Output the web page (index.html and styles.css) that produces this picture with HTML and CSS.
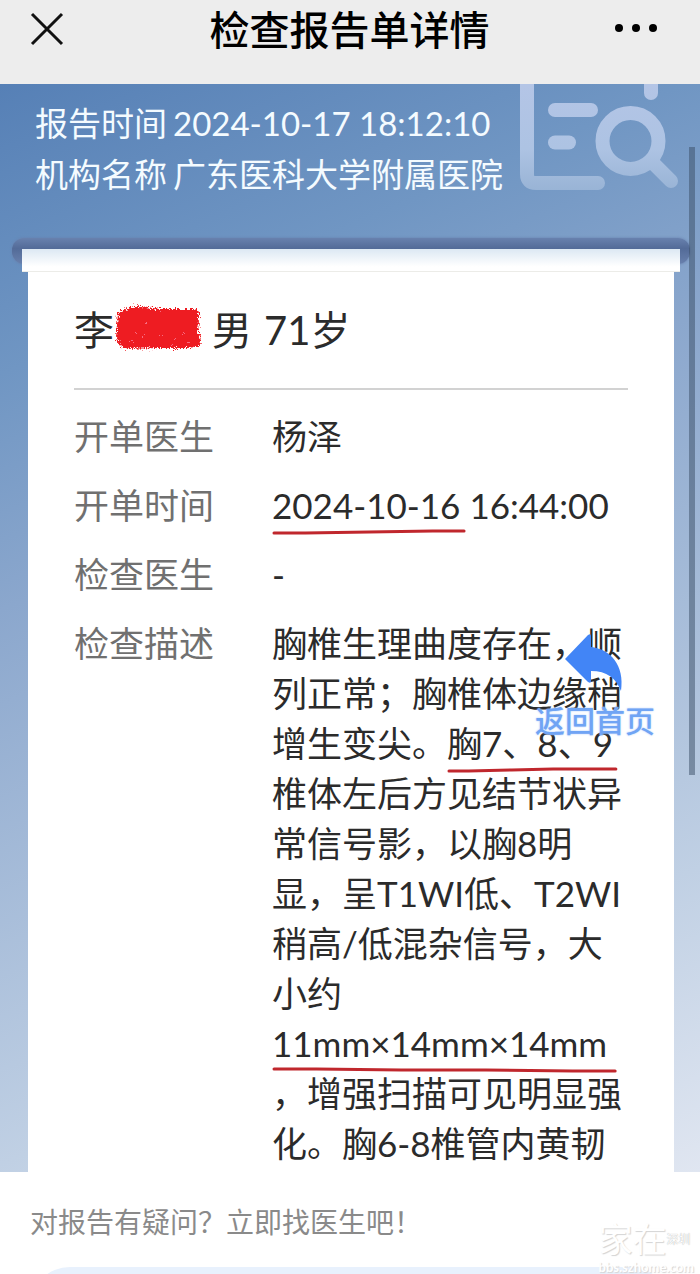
FILE: index.html
```html
<!DOCTYPE html>
<html lang="zh-CN">
<head>
<meta charset="UTF-8">
<meta name="viewport" content="width=device-width,initial-scale=1">
<title>检查报告单详情</title>
<link rel="stylesheet" href="styles.css">
</head>
<body>
<div class="app">
  <header class="navbar">
    <button class="navBtn" aria-label="关闭">
      <svg width="34" height="34" viewBox="0 0 34 34"><path d="M2 2L32 32M32 2L2 32" stroke="#111" stroke-width="3" fill="none"/></svg>
    </button>
    <h1>检查报告单详情</h1>
    <button class="navBtn navMore" aria-label="更多">
      <svg width="42" height="34" viewBox="0 0 42 34"><circle cx="4" cy="16" r="4"/><circle cx="21" cy="16" r="4"/><circle cx="38" cy="16" r="4"/></svg>
    </button>
  </header>

  <main class="report">
    <svg class="reportIcon" width="160" height="108" viewBox="0 0 160 108">
      <defs>
        <linearGradient id="iconFill" gradientUnits="userSpaceOnUse" x1="0" y1="0" x2="0" y2="108">
          <stop offset="0" stop-color="#b4c5e6"/>
          <stop offset="0.6" stop-color="#adc3e3"/>
          <stop offset="1" stop-color="#98b3d5"/>
        </linearGradient>
      </defs>
      <g fill="none" stroke="url(#iconFill)" stroke-width="14" stroke-linecap="round">
        <path d="M7 -10V90Q7 99 16 99H78"/>
        <path d="M35 26H71"/>
        <path d="M35 58.5H49"/>
        <path d="M131 -10V9"/>
        <circle cx="110.500" cy="57" r="28"/>
        <path d="M132 78L151 97"/>
      </g>
    </svg>

    <div class="reportInfo">
      <p><span>报告时间</span><span>2024-10-17 18:12:10</span></p>
      <p><span>机构名称</span><span>广东医科大学附属医院</span></p>
    </div>

    <div class="slot"><div class="paperTop"></div></div>

    <section class="card">
      <h2 class="patient">
        <span>李</span>
        <svg class="redact" width="92" height="50" viewBox="0 0 92 50">
          <defs>
            <filter id="rough" x="-5%" y="-10%" width="110%" height="120%">
              <feTurbulence type="fractalNoise" baseFrequency="0.7" numOctaves="2" seed="4" result="noise"/>
              <feDisplacementMap in="SourceGraphic" in2="noise" scale="9" xChannelSelector="R" yChannelSelector="G"/>
            </filter>
          </defs>
          <g filter="url(#rough)">
            <path d="M6 10Q16 4 28 3L46 6L84 6Q88 8 87 16L86 30Q91 36 87 43L76 45H46L14 46Q5 42 4 34Z" fill="#ee1c24"/>
            <path d="M24 29h1M30 34h1M42 38h1M49 32h1M62 36h1M72 30h1M76 39h1M34 20h1M47 8h1M36 7h1M20 38h1M60 42h1" stroke="#fbd" stroke-width="1"/>
          </g>
        </svg>
        <span>男</span>
        <span>71岁</span>
      </h2>

      <dl class="fields">
        <dt>开单医生</dt>
        <dd>杨泽</dd>
        <dt>开单时间</dt>
        <dd><span class="marked">2024-10-16<svg class="mark" viewBox="0 0 198 6" preserveAspectRatio="none"><path d="M2 4L34 4L99 3L164 2L196 2"/></svg></span> 16:44:00</dd>
        <dt>检查医生</dt>
        <dd>-</dd>
        <dt>检查描述</dt>
        <dd class="desc">胸椎生理曲度存在，顺<br>列正常；胸椎体边缘稍<br>增生变尖。<span class="marked">胸7、8、9<svg class="mark" viewBox="0 0 174 6" preserveAspectRatio="none"><path d="M2 4L22 4L66 3L108 2L172 2"/></svg></span><br>椎体左后方见结节状异<br>常信号影，以胸8明<br>显，呈T1WI低、T2WI<br>稍高/低混杂信号，大<br>小约<br><span class="marked">11mm×14mm×14mm<svg class="mark" viewBox="0 0 342 6" preserveAspectRatio="none"><path d="M2 2L44 2L128 3L212 3L298 4L340 4"/></svg></span><br>，增强扫描可见明显强<br>化。胸6-8椎管内黄韧</dd>
      </dl>
    </section>

    <a class="backHome" href="#">
      <svg width="60" height="62" viewBox="0 0 60 62"><path d="M0 29L23 5Q26 3 26 6V17C45 19 60 35 56 61C51 48 42 41 26 41V51Q26 54 23 52Z" fill="#4285f6"/></svg>
      <span>返回首页</span>
    </a>
    <div class="scrollThumb"></div>
  </main>

  <footer class="ask">
    <p>对报告有疑问？立即找医生吧！</p>
    <button class="askBtn" aria-label="找医生"></button>
    <div class="watermark">
      <div class="wmName">家在<small>深圳</small></div>
      <div class="wmUrl">bbs.szhome.com</div>
    </div>
  </footer>
</div>
</body>
</html>
```

FILE: styles.css
```css
* {
  box-sizing: border-box;
}

body {
  margin: 0;
  font-family: Lato, "Noto Sans CJK SC", sans-serif;
  color: #2b2b2b;
  background: white;
}

h1, h2, p, dl, dd {
  margin: 0;
  font-weight: normal;
}

button {
  border: none;
  padding: 0;
  background: none;
  cursor: pointer;
}

.app {
  display: flex;
  flex-direction: column;
  height: 100vh;
  overflow: hidden;
}

/* Top bar */
.navbar {
  display: grid;
  grid-template-columns: 1fr auto 1fr;
  align-items: start;
  height: 84px;
  flex-shrink: 0;
  padding: 1px 43px 0 30px;
  background: #ededed;
}
.navbar h1 {
  padding-left: 12px;
  font-size: 40px;
  line-height: 58px;
  font-weight: 500;
  color: black;
}
.navBtn {
  display: flex;
  align-items: center;
  height: 56px;
}
.navMore {
  justify-self: end;
}

/* Blue report area */
.report {
  position: relative;
  flex: 1;
  min-height: 0;
  overflow: hidden;
  background: linear-gradient(157deg, #5680b6, #7096c3 21%, #8ba7cd 38%, #c0d0e4 78%, #e0e6f1);
}
.reportIcon {
  position: absolute;
  top: 0;
  right: 20px;
}
.reportInfo {
  position: relative;
  padding: 14px 35px 0;
  font-size: 33px;
  line-height: 51px;
  color: #f4fbff;
}
.reportInfo p {
  display: flex;
  gap: 6px;
}

/* Slot the paper comes out of */
.slot {
  height: 26px;
  margin: 38px 10px 0 12px;
  padding: 11px 10px 0;
  border-radius: 12px;
  background: linear-gradient(#6881ae, #536b98 40%, #6880ad);
  box-shadow: 0 0 3px #6881ae;
}
.paperTop {
  height: 23px;
  background: linear-gradient(#dce8f3, white 80%);
  border-bottom: 1px solid #ecece8;
}

.card {
  margin: 8px 26px 0 28px;
  padding: 28px 46px 40px;
  background: white;
}
.patient {
  display: flex;
  align-items: center;
  font-size: 40px;
  line-height: 60px;
  padding-bottom: 28px;
  border-bottom: 2px solid #d2d2d2;
}
.redact {
  margin: -4px 8px 0 -2px;
}
.patient span:last-child {
  margin-left: 12px;
}

.fields {
  display: grid;
  grid-template-columns: auto 1fr;
  column-gap: 58px;
  row-gap: 19px;
  padding-top: 21px;
  font-size: 35px;
  line-height: 50px;
  white-space: nowrap;
}
.fields dt {
  color: #707070;
}

/* Red pen lines */
.marked {
  position: relative;
}
.mark {
  position: absolute;
  left: 0;
  bottom: -9px;
  width: 103%;
  height: 6px;
}
.mark path {
  fill: none;
  stroke: #c0272d;
  stroke-width: 3;
  stroke-linecap: round;
}

.backHome {
  position: absolute;
  top: 546px;
  right: 45px;
  display: flex;
  flex-direction: column;
  align-items: center;
  gap: 6px;
  font-size: 30px;
  line-height: 44px;
  font-weight: 500;
  text-decoration: none;
  color: #70a4f4;
  text-shadow: 0 0 2px #a8c8fa;
}
.scrollThumb {
  position: absolute;
  top: 63px;
  right: 5px;
  width: 6px;
  height: 628px;
  background: rgba(55, 75, 100, 0.5);
}

/* Bottom bar */
.ask {
  position: relative;
  flex-shrink: 0;
  height: 102px;
  overflow: hidden;
  padding: 29px 30px 0;
  background: white;
}
.ask p {
  font-size: 28px;
  line-height: 42px;
  color: #8a8a8a;
}
.askBtn {
  display: block;
  width: 100%;
  height: 80px;
  margin-top: 24px;
  border-radius: 40px;
  background: #e8f1fd;
}
.watermark {
  position: absolute;
  right: 6px;
  bottom: 0;
  color: white;
  text-shadow: 1px 1px 1px #d4d4d4;
}
.wmName {
  font-size: 34px;
  line-height: 40px;
}
.wmName small {
  font-size: 12px;
  vertical-align: 8px;
  text-shadow: 0 0 1px #999;
}
.wmUrl {
  font-size: 13px;
  line-height: 14px;
  font-weight: bold;
}
```
